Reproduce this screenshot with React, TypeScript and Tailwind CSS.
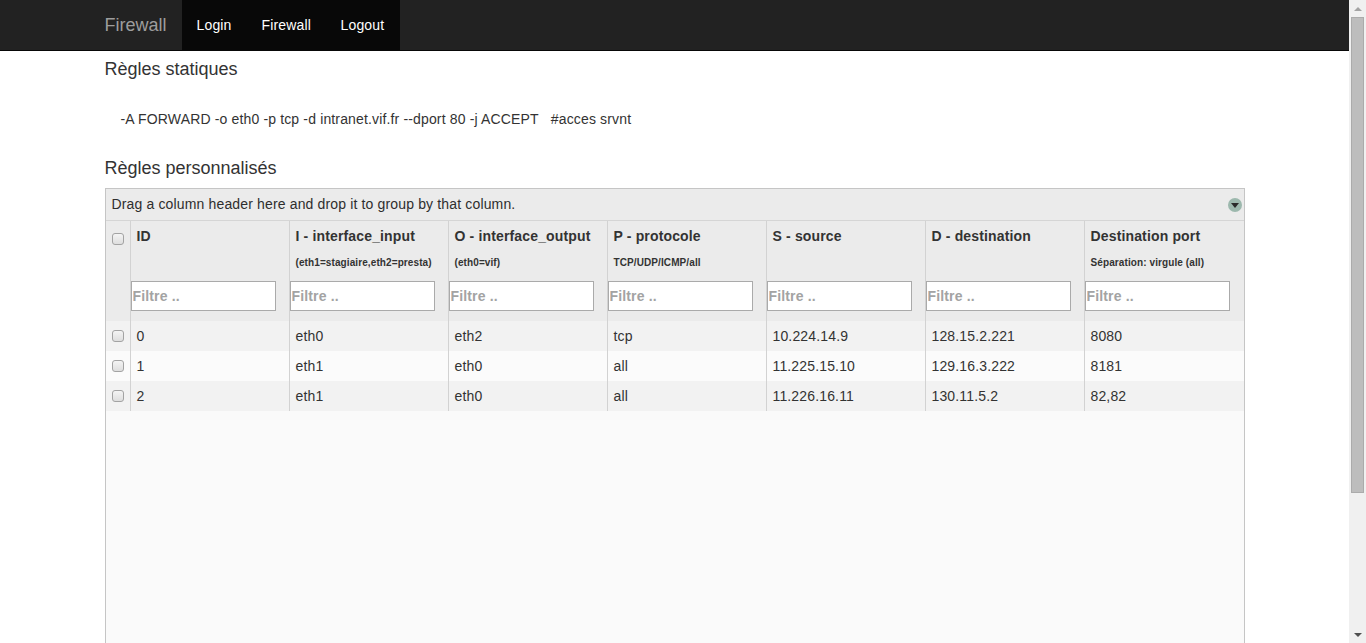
import { Fragment } from 'react';

type Rule = {
  id: string;
  input: string;
  output: string;
  proto: string;
  source: string;
  dest: string;
  port: string;
};

const columns = [
  { title: 'ID', hint: '' },
  { title: 'I - interface_input', hint: '(eth1=stagiaire,eth2=presta)' },
  { title: 'O - interface_output', hint: '(eth0=vif)' },
  { title: 'P - protocole', hint: 'TCP/UDP/ICMP/all' },
  { title: 'S - source', hint: '' },
  { title: 'D - destination', hint: '' },
  { title: 'Destination port', hint: 'Séparation: virgule (all)' },
];

const rules: Rule[] = [
  { id: '0', input: 'eth0', output: 'eth2', proto: 'tcp', source: '10.224.14.9', dest: '128.15.2.221', port: '8080' },
  { id: '1', input: 'eth1', output: 'eth0', proto: 'all', source: '11.225.15.10', dest: '129.16.3.222', port: '8181' },
  { id: '2', input: 'eth1', output: 'eth0', proto: 'all', source: '11.226.16.11', dest: '130.11.5.2', port: '82,82' },
];

const navLinks = [
  { label: 'Login', w: 'w-[65px]' },
  { label: 'Firewall', w: 'w-[79px]' },
  { label: 'Logout', w: 'w-[74px]' },
];

const gridCols = 'grid grid-cols-[24px_159px_159px_159px_159px_159px_159px_1fr]';

function Check() {
  return (
    <span className="block w-[12px] h-[12px] rounded-[3px] border border-[#a3a3a3] bg-gradient-to-b from-[#f4f4f4] to-[#dedede]" />
  );
}

// window scrollbar, as seen in the screenshot
function Scrollbar() {
  return (
    <div className="w-[17px] shrink-0 bg-[#f0f0f0] flex flex-col items-center">
      <div className="h-[17px] flex items-center justify-center">
        <span className="w-0 h-0 border-l-[4px] border-r-[4px] border-b-[4px] border-l-transparent border-r-transparent border-b-[#a3a3a3]" />
      </div>
      <div className="w-[13px] h-[476px] bg-[#bdbdbd] border border-[#ababab]" />
      <div className="flex-1" />
      <div className="h-[17px] flex items-center justify-center">
        <span className="w-0 h-0 border-l-[4px] border-r-[4px] border-t-[4px] border-l-transparent border-r-transparent border-t-[#505050]" />
      </div>
    </div>
  );
}

export default function App() {
  return (
    <div className="flex h-[643px] overflow-hidden bg-white text-[14px] tracking-[0.15px] text-[#333] font-['Liberation_Sans',Arial,sans-serif]">
      <div className="flex-1 min-w-0 overflow-hidden">
        {/* navbar */}
        <div className="h-[51px] bg-[#222] border-b border-[#080808]">
          <div className="w-[1170px] mx-auto px-[15px] flex h-[50px]">
            <a className="-ml-[15px] px-[15px] flex items-center text-[18px] tracking-normal text-[#9d9d9d]">Firewall</a>
            <ul className="flex bg-[#080808]">
              {navLinks.map(l => (
                <li key={l.label} className={`${l.w} pl-[15px] flex items-center text-white`}>{l.label}</li>
              ))}
            </ul>
          </div>
        </div>

        <div className="w-[1170px] mx-auto px-[15px]">
          <h4 className="mt-[8px] mb-0 text-[18px] leading-[20px] tracking-normal font-normal">Règles statiques</h4>
          <p className="mt-[30px] pl-[16px] leading-[20px]">
            -A FORWARD -o eth0 -p tcp -d intranet.vif.fr --dport 80 -j ACCEPT&nbsp;&nbsp;&nbsp;#acces srvnt
          </p>
          <h4 className="mt-[29px] text-[18px] leading-[20px] tracking-normal font-normal">Règles personnalisés</h4>

          {/* grid */}
          <div className="mt-[10px] border border-[#c5c5c5] bg-[#fafafa]">
            <div className="h-[32px] bg-[#ebebeb] border-b border-[#d5d5d5] flex items-center justify-between pl-[6px] pr-[2px] text-[#2e2e2e]">
              <span>Drag a column header here and drop it to group by that column.</span>
              <span className="w-[14px] h-[14px] rounded-full bg-[#9cb8ad] flex items-center justify-center">
                <span className="w-0 h-0 border-l-[4px] border-r-[4px] border-t-[5px] border-l-transparent border-r-transparent border-t-[#2a2a2a] mt-[1px]" />
              </span>
            </div>

            <div className={`${gridCols} h-[100px] bg-[#ebebeb]`}>
              <div className="pl-[6px] pt-[12px]">
                <Check />
              </div>
              {columns.map(c => (
                <div key={c.title} className="border-l border-[#d2d2d2] flex flex-col">
                  <div className="px-[6px] pt-[5px] font-bold leading-[20px]">{c.title}</div>
                  <div className="px-[6px] h-[35px] pt-[10px] text-[10px] font-bold leading-[14px] tracking-[0.1px]">{c.hint}</div>
                  <input
                    placeholder="Filtre .."
                    className="w-[145px] h-[30px] border border-[#aaa] bg-white px-[1px] text-[14px] font-bold placeholder:text-[#a3a3a3] outline-none"
                  />
                </div>
              ))}
            </div>

            {rules.map((r, i) => (
              <div key={r.id} className={`${gridCols} h-[30px] ${i % 2 === 0 ? 'bg-[#f2f2f2]' : 'bg-[#fbfbfb]'}`}>
                <div className="pl-[6px] flex items-center">
                  <Check />
                </div>
                {[r.id, r.input, r.output, r.proto, r.source, r.dest, r.port].map((v, j) => (
                  <Fragment key={j}>
                    <div className="border-l border-[#d2d2d2] px-[6px] flex items-center">{v}</div>
                  </Fragment>
                ))}
              </div>
            ))}

            <div className="h-[330px]" />
          </div>
        </div>
      </div>
      <Scrollbar />
    </div>
  );
}
